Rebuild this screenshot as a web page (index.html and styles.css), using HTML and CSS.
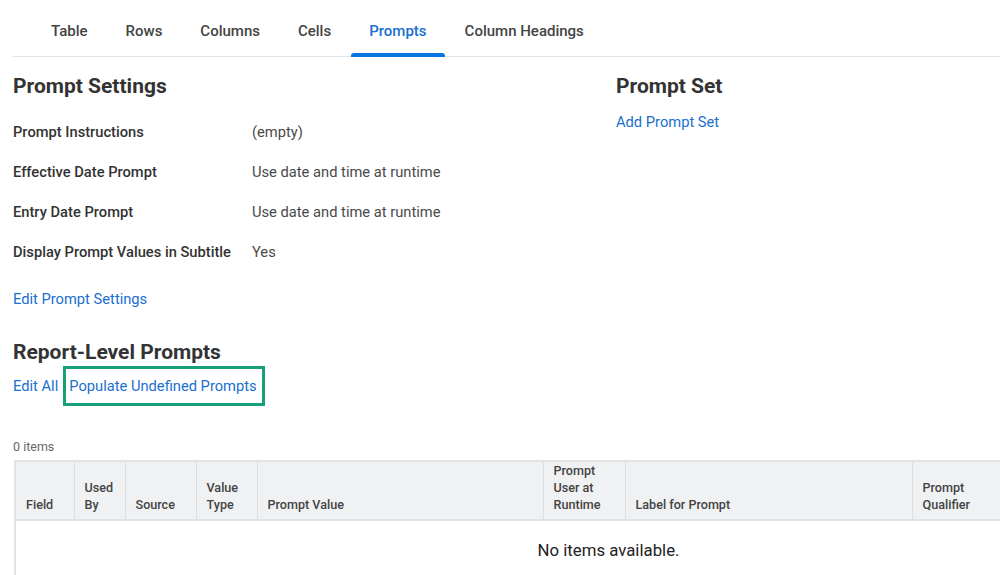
FILE: index.html
```html
<!DOCTYPE html>
<html lang="en">
<head>
    <meta charset="UTF-8">
    <title>Prompts</title>
    <link rel="stylesheet" href="styles.css">
</head>
<body>
<div class="page">
    <div class="tabs">
        <span>Table</span>
        <span>Rows</span>
        <span>Columns</span>
        <span>Cells</span>
        <span class="current">Prompts</span>
        <span>Column Headings</span>
    </div>

    <div class="top">
        <div class="settings">
            <h2>Prompt Settings</h2>
            <ul class="fields">
                <li><b>Prompt Instructions</b><span>(empty)</span></li>
                <li><b>Effective Date Prompt</b><span>Use date and time at runtime</span></li>
                <li><b>Entry Date Prompt</b><span>Use date and time at runtime</span></li>
                <li><b>Display Prompt Values in Subtitle</b><span>Yes</span></li>
            </ul>
            <a class="link edit" href="#">Edit Prompt Settings</a>
        </div>
        <div class="set">
            <h2>Prompt Set</h2>
            <a class="link" href="#">Add Prompt Set</a>
        </div>
    </div>

    <h2 class="report">Report-Level Prompts</h2>
    <div class="actions">
        <a class="link" href="#">Edit All</a>
        <span class="mark"><a class="link" href="#">Populate Undefined Prompts</a></span>
    </div>

    <div class="count">0 items</div>

    <table class="grid">
        <thead>
        <tr>
            <th class="c1">Field</th>
            <th class="c2">Used<br>By</th>
            <th class="c3">Source</th>
            <th class="c4">Value<br>Type</th>
            <th class="c5">Prompt Value</th>
            <th class="c6">Prompt<br>User at<br>Runtime</th>
            <th class="c7">Label for Prompt</th>
            <th class="c8">Prompt<br>Qualifier</th>
        </tr>
        </thead>
        <tbody>
        <tr>
            <td colspan="8" class="empty">No items available.</td>
        </tr>
        </tbody>
    </table>
</div>
</body>
</html>
```

FILE: styles.css
```css
* {
    margin: 0;
    padding: 0;
    box-sizing: border-box;
}

ul {
    list-style: none;
}

html, body {
    width: 1000px;
    height: 575px;
    overflow: hidden;
    background-color: #fff;
}

body {
    font-family: Roboto, "Liberation Sans", Arial, sans-serif;
    font-size: 14.7px;
    color: #333;
}

.page {
    padding-left: 12px;
}

.link {
    color: #1a6fd0;
    text-decoration: none;
    line-height: 20px;
}

h2 {
    font-size: 21px;
    line-height: 24px;
    font-weight: 700;
    color: #333;
}

/* tab bar */
.tabs {
    display: flex;
    padding-left: 21px;
    border-bottom: 1px solid #e2e5ea;
}

.tabs span {
    position: relative;
    padding: 21px 18px 15px;
    margin-right: 2px;
    font-size: 15px;
    line-height: 20px;
    font-weight: 500;
    color: #444;
}

.tabs span.current {
    color: #1a6fd0;
}

.tabs span.current::after {
    content: "";
    position: absolute;
    left: 0;
    right: 0;
    bottom: -1px;
    height: 4px;
    border-radius: 3px 3px 0 0;
    background-color: #0875e1;
}

/* settings block */
.top {
    display: grid;
    grid-template-columns: 603px 1fr;
    padding: 17px 0 0 1px;
}

.fields {
    margin-top: 14px;
}

.fields li {
    display: flex;
    height: 40px;
    line-height: 20px;
    padding-top: 10px;
}

.fields b {
    width: 239px;
    font-weight: 500;
    color: #333;
}

.fields span {
    color: #4a4a4a;
}

.edit {
    display: block;
    margin-top: 17px;
}

.set .link {
    display: block;
    margin-top: 14px;
}

/* report level prompts */
.report {
    margin: 31px 0 0 1px;
}

.actions {
    display: flex;
    align-items: center;
    gap: 5px;
    margin: 2px 0 0 1px;
}

.mark {
    border: 3px solid #16a07a;
    padding: 7px 5px 7px 3px;
}

.mark .link {
    display: block;
}

.count {
    margin: 33px 0 0 1px;
    font-size: 12.5px;
    line-height: 16px;
    color: #666;
}

/* table */
.grid {
    margin: 5px 0 0 2px;
    width: 1186px;
    border-collapse: collapse;
    table-layout: fixed;
    border-left: 2px solid #e2e3e5;
    border-top: 2px solid #e2e3e5;
}

.grid th {
    height: 56px;
    padding: 0 10px 6px;
    vertical-align: bottom;
    text-align: left;
    font-size: 12.6px;
    line-height: 17px;
    font-weight: 500;
    color: #444;
    background-color: #f0f1f3;
    border-right: 1px solid #dcdee1;
    border-bottom: 2px solid #e0e1e3;
}

.c1 { width: 59px; }
.c2 { width: 51px; }
.c3 { width: 71px; }
.c4 { width: 61px; }
.c5 { width: 286px; }
.c6 { width: 82px; }
.c7 { width: 287px; }
.c8 { width: 289px; }

.empty {
    height: 60px;
    text-align: center;
    font-size: 16.8px;
    color: #222;
    padding-bottom: 2px;
}
```
